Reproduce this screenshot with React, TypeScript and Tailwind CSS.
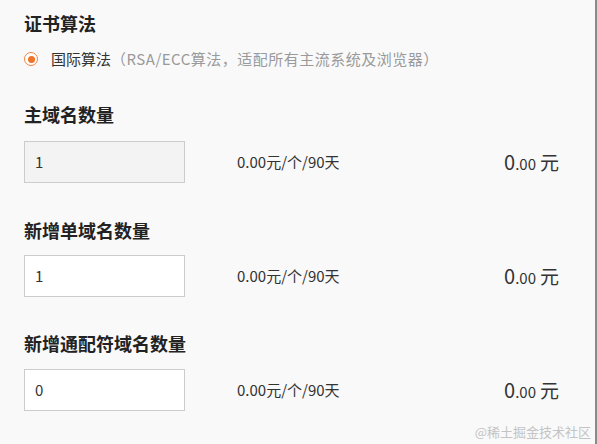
import React from 'react';

const font = { fontFamily: '"Noto Sans CJK SC", "Noto Sans", sans-serif' };

const rows = [
  { label: '主域名数量', value: '1', disabled: true, headGap: 'mt-[33px]', inputGap: 'mt-[15px]' },
  { label: '新增单域名数量', value: '1', disabled: false, headGap: 'mt-[35px]', inputGap: 'mt-[13px]' },
  { label: '新增通配符域名数量', value: '0', disabled: false, headGap: 'mt-[34px]', inputGap: 'mt-[14px]' },
];

const QtyRow = ({ value, disabled }: { value: string; disabled: boolean }) => (
  <div className="flex items-center pr-[36px]">
    <div
      className={`w-[161px] h-[42px] border border-[#cccccc] flex items-center pl-[10px] text-[15px] text-[#333] ${
        disabled ? 'bg-[#f3f3f3]' : 'bg-white'
      }`}
    >
      {value}
    </div>
    <span className="ml-[52px] text-[15px] text-[#333]">0.00元/个/90天</span>
    <span className="ml-auto text-[#333] flex items-baseline">
      <span className="text-[20px]">0</span>
      <span className="text-[15px]">.00</span>
      <span className="text-[19px] ml-[4px]">元</span>
    </span>
  </div>
);

export default function App() {
  return (
    <div
      className="relative w-[597px] h-[444px] bg-[#f9f9f9] border-r-2 border-[#8a8a8a] overflow-hidden pl-[24px] pt-[11px] flex flex-col"
      style={font}
    >
      <h2 className="text-[18px] leading-[24px] font-bold text-[#222]">证书算法</h2>
      <div className="mt-[14px] h-[20px] flex items-center">
        <span className="w-[14px] h-[14px] rounded-full border border-[#f0853e] flex items-center justify-center bg-white">
          <span className="w-[7px] h-[7px] rounded-full bg-[#ee7428]" />
        </span>
        <span className="ml-[13px] text-[15px] text-[#333]">国际算法</span>
        <span className="text-[15px] tracking-[0.5px] text-[#9a9a9a]">（RSA/ECC算法，适配所有主流系统及浏览器）</span>
      </div>

      {rows.map((r) => (
        <div key={r.label} className="flex flex-col">
          <h2 className={`${r.headGap} text-[18px] leading-[24px] font-bold text-[#222]`}>{r.label}</h2>
          <div className={r.inputGap}>
            <QtyRow value={r.value} disabled={r.disabled} />
          </div>
        </div>
      ))}

      <span className="absolute right-[4px] bottom-[3px] text-[13px] text-[#c4c4c4]">@稀土掘金技术社区</span>
    </div>
  );
}
